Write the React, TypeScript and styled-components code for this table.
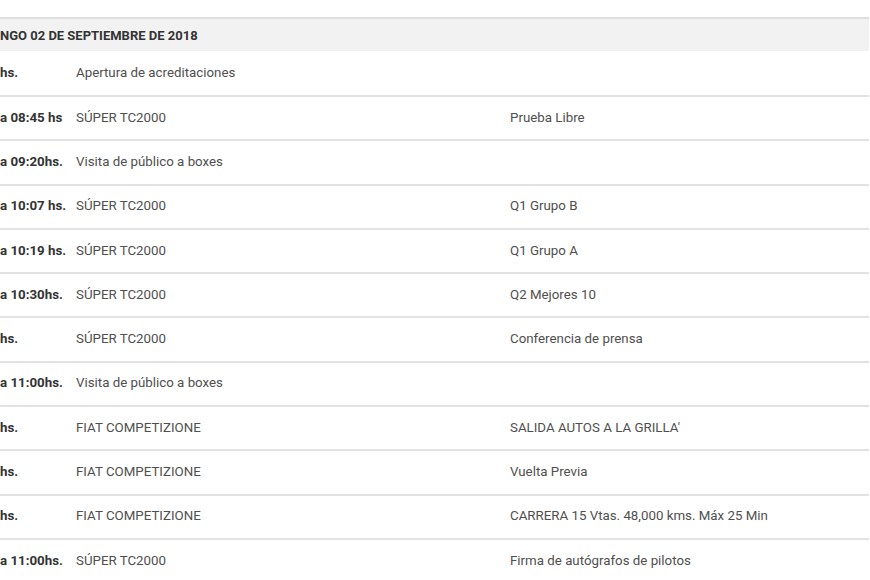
import React from 'react';
import styled, { createGlobalStyle } from 'styled-components';

const GlobalStyle = createGlobalStyle`
    html, body {
        margin: 0;
        padding: 0;
        background: #ffffff;
        font-family: Roboto, 'Liberation Sans', Arial, sans-serif;
    }
`

type Item = { time: string; event: string; detail?: string };

const schedule: Item[] = [
    { time: 'hs.', event: 'Apertura de acreditaciones' },
    { time: 'a 08:45 hs', event: 'SÚPER TC2000', detail: 'Prueba Libre' },
    { time: 'a 09:20hs.', event: 'Visita de público a boxes' },
    { time: 'a 10:07 hs.', event: 'SÚPER TC2000', detail: 'Q1 Grupo B' },
    { time: 'a 10:19 hs.', event: 'SÚPER TC2000', detail: 'Q1 Grupo A' },
    { time: 'a 10:30hs.', event: 'SÚPER TC2000', detail: 'Q2 Mejores 10' },
    { time: 'hs.', event: 'SÚPER TC2000', detail: 'Conferencia de prensa' },
    { time: 'a 11:00hs.', event: 'Visita de público a boxes' },
    { time: 'hs.', event: 'FIAT COMPETIZIONE', detail: "SALIDA AUTOS A LA GRILLA'" },
    { time: 'hs.', event: 'FIAT COMPETIZIONE', detail: 'Vuelta Previa' },
    { time: 'hs.', event: 'FIAT COMPETIZIONE', detail: 'CARRERA 15 Vtas. 48,000 kms. Máx 25 Min' },
    { time: 'a 11:00hs.', event: 'SÚPER TC2000', detail: 'Firma de autógrafos de pilotos' },
]

export default function App() {
    return (
        <>
            <GlobalStyle />
            <Page>
                <Table>
                    <DayHeader>NGO 02 DE SEPTIEMBRE DE 2018</DayHeader>
                    {schedule.map((item, i) => (
                        <Row key={i} first={i === 0}>
                            <Time>{item.time}</Time>
                            <Cell>{item.event}</Cell>
                            <Cell>{item.detail}</Cell>
                        </Row>
                    ))}
                </Table>
            </Page>
        </>
    )
}

const Page = styled.div`
    padding-top: 17px;
    overflow: hidden;
    height: 580px;
    box-sizing: border-box;
`

const Table = styled.div`
    border-top: 2px solid #e0e0e0;
    width: 869px;
`

const DayHeader = styled.div`
    height: 32px;
    display: flex;
    align-items: center;
    background: #f2f2f2;
    color: #333333;
    font-size: 13px;
    font-weight: 700;
    white-space: nowrap;
`

const Row = styled.div<{ first?: boolean }>`
    display: grid;
    grid-template-columns: 76px 434px 1fr;
    align-items: center;
    height: ${props => props.first ? '44px' : '44.3px'};
    padding-bottom: 2px;
    box-sizing: border-box;
    border-top: ${props => props.first ? 'none' : '2px solid #e2e2e2'};
    font-size: 13.3px;
    white-space: nowrap;
`

const Time = styled.div`
    font-weight: 700;
    color: #333333;
`

const Cell = styled.div`
    color: #4f4f4f;
`
